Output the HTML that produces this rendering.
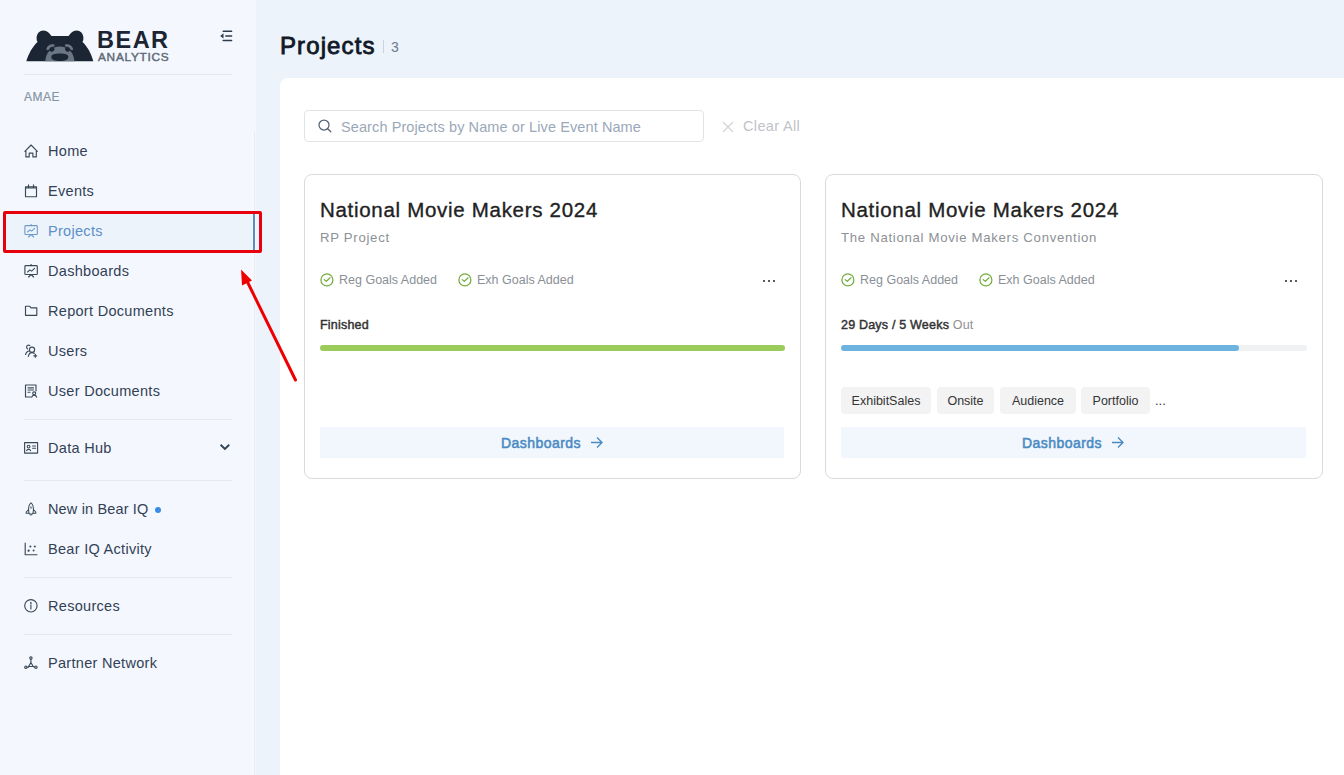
<!DOCTYPE html>
<html><head><meta charset="utf-8">
<style>
*{box-sizing:border-box;margin:0;padding:0}
html,body{width:1344px;height:775px;overflow:hidden;background:#ECF3FB;font-family:"Liberation Sans",sans-serif;}
.sb{position:absolute;left:0;top:0;width:256px;height:775px;background:#F4F8FE;}
.sb .edge{position:absolute;right:1px;top:132px;width:1px;height:643px;background:#E8EBF1;box-shadow:-2px 0 2px #F8FBFF}
.logo{position:absolute;left:26px;top:30px}
.brand1{position:absolute;left:97px;top:26.5px;font-size:23.5px;font-weight:bold;color:#1B2533;letter-spacing:1.5px}
.brand2{position:absolute;left:98px;top:50px;font-size:11.8px;color:#5E6A78;letter-spacing:0.75px;-webkit-text-stroke:0.45px #5E6A78}
.coll{position:absolute;left:219px;top:30px}
.div{position:absolute;left:24px;width:208px;height:1px;background:#E3E8EF}
.org{position:absolute;left:24px;top:90px;font-size:12px;color:#8893A3;letter-spacing:0.5px;-webkit-text-stroke:0.2px #8893A3}
.nav{position:absolute;left:24px;height:20px;font-size:14.5px;color:#334155;white-space:nowrap}
.nav svg{position:absolute;left:0;top:3px}
.nav span{position:absolute;left:24px;top:2px;letter-spacing:0.3px}
.active{position:absolute;left:4px;top:212px;width:251px;height:39px;background:#EDF3FB}
.active .bar{position:absolute;right:0;top:1px;width:2px;height:37px;background:#5E8CBB}
.redbox{position:absolute;left:3px;top:211px;width:259px;height:42px;border:3px solid #E8000C;border-radius:2px}
.main{position:absolute;left:280px;top:78px;width:1064px;height:697px;background:#fff;border-top-left-radius:8px}
.h1{position:absolute;left:280px;top:32px;font-size:24px;color:#111827;-webkit-text-stroke:0.85px #111827;letter-spacing:1.1px}
.sep{position:absolute;left:383px;top:40px;width:1px;height:13px;background:#CBD2DC}
.cnt{position:absolute;left:391px;top:39px;font-size:14px;color:#6B7A8C}
.search{position:absolute;left:304px;top:110px;width:400px;height:32px;border:1px solid #E2E3E6;border-radius:4px}
.search svg{position:absolute;left:13px;top:8px}
.search span{position:absolute;left:36px;top:8px;font-size:14.5px;color:#9AA8B9;letter-spacing:0.1px;white-space:nowrap}
.clear{position:absolute;left:722px;top:118px;font-size:14.5px;color:#BFC3C8;white-space:nowrap;width:90px;height:20px}
.clear span{position:absolute;left:21px;top:0px;letter-spacing:0.35px}
.card{position:absolute;top:174px;width:497px;height:305px;border:1px solid #DADADA;border-radius:8px;background:#fff}
.ttl{position:absolute;left:15px;top:23px;font-size:20.5px;color:#222;white-space:nowrap;font-weight:normal;-webkit-text-stroke:0.35px #222;letter-spacing:0.7px}
.sub{position:absolute;left:15px;top:55px;font-size:13.2px;color:#8C9196;white-space:nowrap;letter-spacing:0.7px}
.goal{position:absolute;top:98px;font-size:12.5px;color:#8A8F96;white-space:nowrap}
.goal svg{position:absolute;left:0;top:0px}
.goal span{position:absolute;left:19px;top:0}
.dots{position:absolute;top:105px;width:12px;height:2px;background:linear-gradient(90deg,#5A5A5A 0 2px,transparent 2px 5px,#5A5A5A 5px 7px,transparent 7px 10px,#5A5A5A 10px 12px)}
.stat{position:absolute;left:15px;top:143px;font-size:12.5px;color:#333;white-space:nowrap;-webkit-text-stroke:0.45px #333;letter-spacing:0.2px}
.stat i{font-style:normal;color:#8F8F8F;-webkit-text-stroke:0}
.track{position:absolute;left:15px;top:170px;width:466px;height:6px;border-radius:3px;background:#F0F1F3}
.fill{position:absolute;left:0;top:0;height:6px;border-radius:3px}
.tags{position:absolute;left:15px;top:212px;height:27px}
.tag{position:absolute;top:0;height:27px;background:#F3F3F3;border-radius:4px;font-size:12.5px;color:#333;text-align:center;line-height:29px}
.btn{position:absolute;left:15px;top:252px;width:464px;height:31px;background:#F2F7FD;border-radius:1px}
.btn span{position:absolute;top:8px;font-size:14px;color:#4B8BC3;white-space:nowrap;-webkit-text-stroke:0.55px #4B8BC3;letter-spacing:0.45px}
.btn svg{position:absolute;top:9px}
</style></head><body>
<div class="sb">
  <div class="edge"></div>
  <svg class="logo" width="68" height="32" viewBox="0 0 68 32">
    <path fill="#1B2533" d="M0.3 31.3 C2.5 24 6.5 16.5 11.5 12 C10 9 10.3 5.5 12.6 2.6 C15.2 -0.4 19.8 0 22.5 2.6 C23.6 3.7 24.6 5 25.5 6 L42.5 6 C43.4 5 44.4 3.7 45.5 2.6 C48.2 0 52.8 -0.4 55.4 2.6 C57.7 5.5 58 9 56.5 12 C61.5 16.5 65.5 24 67.3 31.3 Z"/>
    <path fill="#6B7683" d="M19.2 31.3 C19.8 22 26 16.5 33.8 16.5 C41.6 16.5 47.8 22 48.4 31.3 Z"/>
    <path fill="#6B7683" d="M20.5 18.5 C21.5 15.2 24.5 13.6 27.5 14.3 C28.8 14.6 29 15.4 28.2 16.2 C26 17.8 23.8 19.3 21.5 20.2 C20.6 20.5 20.3 19.3 20.5 18.5 Z"/>
    <path fill="#6B7683" d="M47 18.5 C46 15.2 43 13.6 40 14.3 C38.7 14.6 38.5 15.4 39.3 16.2 C41.5 17.8 43.7 19.3 46 20.2 C46.9 20.5 47.2 19.3 47 18.5 Z"/>
    <ellipse fill="#1B2533" cx="26" cy="19.3" rx="2.6" ry="2.3" transform="rotate(-30 26 19.3)"/>
    <ellipse fill="#1B2533" cx="41.6" cy="19.3" rx="2.6" ry="2.3" transform="rotate(30 41.6 19.3)"/>
    <path fill="#1B2533" d="M25.3 27 C25.3 24.5 28.5 23.6 33.8 23.6 C39.1 23.6 42.3 24.5 42.3 27 C42.3 29.8 38.8 31 33.8 31 C28.8 31 25.3 29.8 25.3 27 Z"/>
  </svg>
  <div class="brand1">BEAR</div>
  <div class="brand2">ANALYTICS</div>
  <svg class="coll" width="14" height="12" viewBox="0 0 14 12">
    <path d="M4.2 1.3H12.6M6.8 5.9H12.6M4.2 10.6H12.6" stroke="#2F3B4B" stroke-width="1.5" stroke-linecap="round" fill="none"/>
    <path d="M1.2 5.9L4.5 3.2V8.6Z" fill="#2F3B4B"/>
  </svg>
  <div class="div" style="top:74px"></div>
  <div class="org">AMAE</div>

  <div class="active"><div class="bar"></div></div>

  <div class="nav" style="top:141px">
    <svg width="15" height="15" viewBox="0 0 15 15" fill="none" stroke="#3B4858" stroke-width="1.15" stroke-linejoin="round" stroke-linecap="round"><path d="M0.9 7.4L7.1 1L13.3 7.4M1.9 6.2V12.9H5.2V9.1H8.9V12.9H12.3V6.2"/></svg>
    <span>Home</span></div>
  <div class="nav" style="top:181px">
    <svg width="15" height="15" viewBox="0 0 15 15" fill="none" stroke="#3B4858" stroke-width="1.15" stroke-linejoin="round" stroke-linecap="round"><rect x="1.5" y="2.7" width="11" height="10"/><path d="M1.5 3.8H12.5M4.5 0.8V3.5M9.5 0.8V3.5"/></svg>
    <span>Events</span></div>
  <div class="nav" style="top:221px;color:#5B8FC7">
    <svg width="15" height="15" viewBox="0 0 15 15" fill="none" stroke="#6C9BCB" stroke-width="1.1" stroke-linejoin="round" stroke-linecap="round"><rect x="0.9" y="1.6" width="12.4" height="8.9" rx="0.8"/><path d="M7.1 0.4V1.6M7.1 10.5L4.6 13M7.1 10.5L9.6 13M3.6 8L5.9 5.9L7.6 7.1L10.6 4.3"/></svg>
    <span>Projects</span></div>
  <div class="nav" style="top:261px">
    <svg width="15" height="15" viewBox="0 0 15 15" fill="none" stroke="#3B4858" stroke-width="1.15" stroke-linejoin="round" stroke-linecap="round"><rect x="0.9" y="1.6" width="12.4" height="8.9" rx="0.8"/><path d="M7.1 0.4V1.6M7.1 10.5L4.6 13M7.1 10.5L9.6 13M3.6 8L5.9 5.9L7.6 7.1L10.6 4.3"/></svg>
    <span>Dashboards</span></div>
  <div class="nav" style="top:301px">
    <svg width="15" height="15" viewBox="0 0 15 15" fill="none" stroke="#3B4858" stroke-width="1.15" stroke-linejoin="round" stroke-linecap="round"><path d="M1.5 2.2H5.6L7 3.8H12.8V11.3H1.5Z"/></svg>
    <span>Report Documents</span></div>
  <div class="nav" style="top:341px">
    <svg width="15" height="15" viewBox="0 0 15 15" fill="none" stroke="#3B4858" stroke-width="1.15" stroke-linejoin="round" stroke-linecap="round"><circle cx="8" cy="5.7" r="2.6"/><path d="M5.9 1.6C4.6 0.5 2.8 1.2 2.6 2.8C2.5 3.6 2.9 4.4 3.5 4.9M1.5 10.5C2 8.7 3 7.6 4.3 7.1M4.3 12.5C4.8 10 6.3 8.6 8 8.6C9 8.6 9.8 8.9 10.4 9.4M11.3 10.3V13.3M9.8 11.8H12.8"/></svg>
    <span>Users</span></div>
  <div class="nav" style="top:381px">
    <svg width="15" height="15" viewBox="0 0 15 15" fill="none" stroke="#3B4858" stroke-width="1.15" stroke-linejoin="round" stroke-linecap="round"><path d="M7 13H1.5V1H12V6.8M4 3.8H9.5M4 6H9.5M4 8.2H6"/><circle cx="10.2" cy="9.3" r="1.5"/><path d="M7.8 13.2C8 11.8 9 11.2 10.2 11.2C11.4 11.2 12.4 11.8 12.6 13.2"/></svg>
    <span>User Documents</span></div>

  <div class="div" style="top:419px"></div>
  <div class="nav" style="top:438px">
    <svg width="15" height="15" viewBox="0 0 15 15" fill="none" stroke="#3B4858" stroke-width="1.1" stroke-linejoin="round" stroke-linecap="round"><rect x="0.6" y="1.6" width="13" height="10.5"/><circle cx="4.6" cy="5.6" r="1.4"/><path d="M2.6 9.6C3 8 6.2 8 6.6 9.6M8.6 5H11.6M8.6 7.2H11.6"/></svg>
    <span>Data Hub</span>
    <svg style="left:195px;top:5px" width="12" height="8" viewBox="0 0 12 8" fill="none" stroke="#334155" stroke-width="1.9"><path d="M1.6 1.8L5.9 6L10.2 1.8"/></svg>
  </div>
  <div class="div" style="top:480px"></div>
  <div class="nav" style="top:499px">
    <svg width="15" height="15" viewBox="0 0 15 15" fill="none" stroke="#3B4858" stroke-width="1.05" stroke-linejoin="round" stroke-linecap="round"><path d="M7 0.8C5 2.3 4.5 4.8 4.6 8C4.6 9.8 4.9 11.3 5.4 12H8.6C9.1 11.3 9.4 9.8 9.4 8C9.5 4.8 9 2.3 7 0.8ZM4.6 7.6L2.2 10V11.2H5M9.4 7.6L11.8 10V11.2H9M7 12.3V13.3M7 4.8V6.3"/></svg>
    <span style="letter-spacing:0.15px">New in Bear IQ</span>
    <div style="position:absolute;left:131px;top:8px;width:6px;height:6px;border-radius:50%;background:#3B8BE6"></div>
  </div>
  <div class="nav" style="top:539px">
    <svg width="15" height="15" viewBox="0 0 15 15" fill="none" stroke="#3B4858" stroke-width="1.15" stroke-linejoin="round" stroke-linecap="round"><path d="M1.2 1V12.7H13"/><circle cx="4.6" cy="8.7" r="0.55" fill="#3B4858"/><circle cx="6.4" cy="4.5" r="0.45" fill="#3B4858"/><circle cx="10.8" cy="4.5" r="0.45" fill="#3B4858"/><circle cx="9.6" cy="8.5" r="0.95" fill="#3B4858" stroke="none"/></svg>
    <span>Bear IQ Activity</span></div>
  <div class="div" style="top:577px"></div>
  <div class="nav" style="top:596px">
    <svg width="15" height="15" viewBox="0 0 15 15" fill="none" stroke="#3B4858" stroke-width="1.15" stroke-linejoin="round" stroke-linecap="round"><circle cx="6.9" cy="6.8" r="6.2"/><path d="M6.9 5.8V10"/><circle cx="6.9" cy="3.9" r="0.35" fill="#3B4858"/></svg>
    <span>Resources</span></div>
  <div class="div" style="top:634px"></div>
  <div class="nav" style="top:653px">
    <svg width="15" height="15" viewBox="0 0 15 15" fill="none" stroke="#3B4858" stroke-width="1.15" stroke-linejoin="round" stroke-linecap="round"><circle cx="6.9" cy="2.1" r="1.2"/><circle cx="1.9" cy="11.2" r="1.2"/><circle cx="11.9" cy="11.2" r="1.2"/><path d="M6.9 3.3V6.5M6.9 6.5L4.6 10.5H9.2Z M3.1 11.2H4.6M9.2 10.5L10.7 11.2"/></svg>
    <span>Partner Network</span></div>

  <div class="redbox"></div>
</div>

<div class="h1">Projects</div>
<div class="sep"></div>
<div class="cnt">3</div>

<div class="main"></div>

<div class="search">
  <svg width="15" height="15" viewBox="0 0 15 15" fill="none" stroke="#566273" stroke-width="1.25" stroke-linecap="round"><circle cx="6" cy="6" r="5"/><path d="M9.7 9.7L12.8 12.8"/></svg>
  <span>Search Projects by Name or Live Event Name</span>
</div>
<div class="clear">
  <svg style="position:absolute;left:0;top:3px" width="12" height="12" viewBox="0 0 12 12" stroke="#CFD2D6" stroke-width="1.1"><path d="M1 1L11 11M11 1L1 11"/></svg>
  <span>Clear All</span>
</div>

<div class="card" style="left:304px">
  <div class="ttl">National Movie Makers 2024</div>
  <div class="sub">RP Project</div>
  <div class="goal" style="left:15px"><svg width="14" height="14" viewBox="0 0 14 14" fill="none" stroke="#74AC3E" stroke-width="1.25" stroke-linecap="round" stroke-linejoin="round"><circle cx="6.9" cy="6.9" r="6"/><path d="M4.2 6.6L6.3 8.4L10 4.8"/></svg><span>Reg Goals Added</span></div>
  <div class="goal" style="left:153px"><svg width="14" height="14" viewBox="0 0 14 14" fill="none" stroke="#74AC3E" stroke-width="1.25" stroke-linecap="round" stroke-linejoin="round"><circle cx="6.9" cy="6.9" r="6"/><path d="M4.2 6.6L6.3 8.4L10 4.8"/></svg><span>Exh Goals Added</span></div>
  <div class="dots" style="left:458px"></div>
  <div class="stat">Finished</div>
  <div class="track" style="width:465px"><div class="fill" style="width:465px;background:#9BCB5B"></div></div>
  <div class="btn"><span style="left:181px">Dashboards</span><svg style="left:270px" width="13" height="13" viewBox="0 0 13 13" fill="none" stroke="#4B8BC3" stroke-width="1.4"><path d="M1 6.5H12M7 1.5L12 6.5L7 11.5"/></svg></div>
</div>

<div class="card" style="left:825px;width:498px">
  <div class="ttl">National Movie Makers 2024</div>
  <div class="sub">The National Movie Makers Convention</div>
  <div class="goal" style="left:15px"><svg width="14" height="14" viewBox="0 0 14 14" fill="none" stroke="#74AC3E" stroke-width="1.25" stroke-linecap="round" stroke-linejoin="round"><circle cx="6.9" cy="6.9" r="6"/><path d="M4.2 6.6L6.3 8.4L10 4.8"/></svg><span>Reg Goals Added</span></div>
  <div class="goal" style="left:153px"><svg width="14" height="14" viewBox="0 0 14 14" fill="none" stroke="#74AC3E" stroke-width="1.25" stroke-linecap="round" stroke-linejoin="round"><circle cx="6.9" cy="6.9" r="6"/><path d="M4.2 6.6L6.3 8.4L10 4.8"/></svg><span>Exh Goals Added</span></div>
  <div class="dots" style="left:459px"></div>
  <div class="stat">29 Days / 5 Weeks <i>Out</i></div>
  <div class="track"><div class="fill" style="width:398px;background:#6DB3DF"></div></div>
  <div class="tags">
    <div class="tag" style="left:0;width:90px">ExhibitSales</div>
    <div class="tag" style="left:96px;width:57px">Onsite</div>
    <div class="tag" style="left:159px;width:76px">Audience</div>
    <div class="tag" style="left:240px;width:69px">Portfolio</div>
    <div style="position:absolute;left:314px;top:0;line-height:27px;font-size:13px;color:#333">...</div>
  </div>
  <div class="btn" style="width:465px"><span style="left:181px">Dashboards</span><svg style="left:270px" width="13" height="13" viewBox="0 0 13 13" fill="none" stroke="#4B8BC3" stroke-width="1.4"><path d="M1 6.5H12M7 1.5L12 6.5L7 11.5"/></svg></div>
</div>

<svg style="position:absolute;left:0;top:0" width="1344" height="775">
  <path d="M295.5 380L245.5 278" stroke="#EE0000" stroke-width="3" stroke-linecap="round" fill="none"/>
  <path d="M241 269.5L252 280.5L242 285.5Z" fill="#EE0000"/>
</svg>
</body></html>
